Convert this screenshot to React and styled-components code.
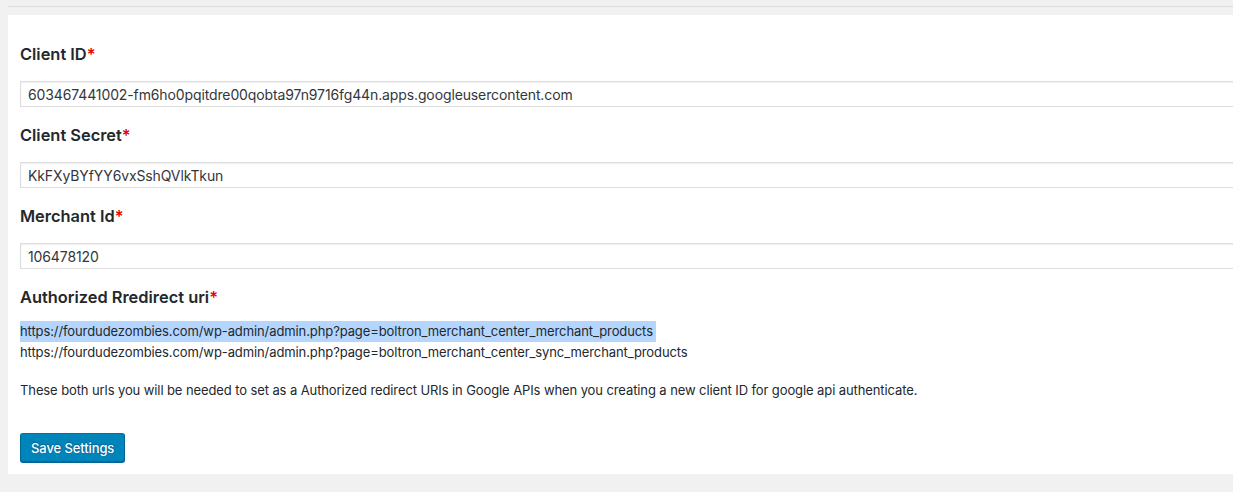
import { createGlobalStyle, styled } from 'styled-components';

const Global = createGlobalStyle`
    html, body {
        margin: 0;
        background: #f1f1f1;
        overflow: hidden;
    }
    body {
        font-family: Inter, "Liberation Sans", Arial, sans-serif;
        color: #23282d;
        letter-spacing: -0.1px;
    }
`;

const Pagina = styled.div`
    width: 1260px;
    padding: 6px 0 0 8px;
`;

const Regua = styled.div`
    border-top: 1px solid #dcdcdc;
    height: 8px;
`;

const Painel = styled.form`
    background: #fff;
    padding: 29px 0 12px 12px;
    display: flex;
    flex-flow: column nowrap;
`;

const Rotulo = styled.label`
    display: block;
    font-size: 16.4px;
    font-weight: 600;
    line-height: 20px;
    letter-spacing: 0;
    margin-top: ${props => props.$primeiro ? '0' : '18px'};
    span {
        color: #e50000;
    }
`;

const Campo = styled.input`
    display: block;
    box-sizing: border-box;
    width: 100%;
    height: 26px;
    margin-top: 17px;
    padding: 2px 7px;
    border: 1px solid #ddd;
    box-shadow: inset 0 1px 2px rgba(0, 0, 0, .07);
    background: #fff;
    color: #32373c;
    font-family: inherit;
    font-size: 14px;
    letter-spacing: -0.12px;
    outline: none;
`;

const Links = styled.div`
    margin-top: 14px;
    display: flex;
    flex-flow: column nowrap;
    font-size: 13px;
    line-height: 21px;
    color: #23282d;
`;

const Selecionado = styled.span`
    background: #b4d5fe;
    padding-right: 3px;
    align-self: flex-start;
`;

const Aviso = styled.p`
    margin: 17px 0 0;
    font-size: 13px;
    line-height: 20px;
`;

const Botao = styled.button`
    align-self: flex-start;
    margin-top: 33px;
    height: 29px;
    padding: 0 10px;
    border: 1px solid #0073aa;
    border-color: #0073aa #006799 #006799;
    border-radius: 3px;
    background: #0085ba;
    box-shadow: 0 1px 0 #006799;
    color: #fff;
    text-shadow: 0 -1px 1px #006799, 1px 0 1px #006799;
    font-family: inherit;
    font-size: 13px;
    font-weight: 500;
    letter-spacing: -0.1px;
    cursor: pointer;
`;

const campos = [
    { id: 'client-id', rotulo: 'Client ID', valor: '603467441002-fm6ho0pqitdre00qobta97n9716fg44n.apps.googleusercontent.com' },
    { id: 'client-secret', rotulo: 'Client Secret', valor: 'KkFXyBYfYY6vxSshQVlkTkun' },
    { id: 'merchant-id', rotulo: 'Merchant Id', valor: '106478120' },
];

const App = () => {
    return (
        <Pagina>
            <Global />
            <Regua />
            <Painel onSubmit={e => e.preventDefault()}>
                {campos.map((campo, i) =>
                    <div key={campo.id}>
                        <Rotulo htmlFor={campo.id} $primeiro={i === 0}>{campo.rotulo}<span>*</span></Rotulo>
                        <Campo id={campo.id} type="text" defaultValue={campo.valor} />
                    </div>
                )}
                <Rotulo>Authorized Rredirect uri<span>*</span></Rotulo>
                <Links>
                    <Selecionado>https://fourdudezombies.com/wp-admin/admin.php?page=boltron_merchant_center_merchant_products</Selecionado>
                    <span>https://fourdudezombies.com/wp-admin/admin.php?page=boltron_merchant_center_sync_merchant_products</span>
                </Links>
                <Aviso>These both urls you will be needed to set as a Authorized redirect URIs in Google APIs when you creating a new client ID for google api authenticate.</Aviso>
                <Botao type="submit">Save Settings</Botao>
            </Painel>
        </Pagina>
    );
};

export default App;
